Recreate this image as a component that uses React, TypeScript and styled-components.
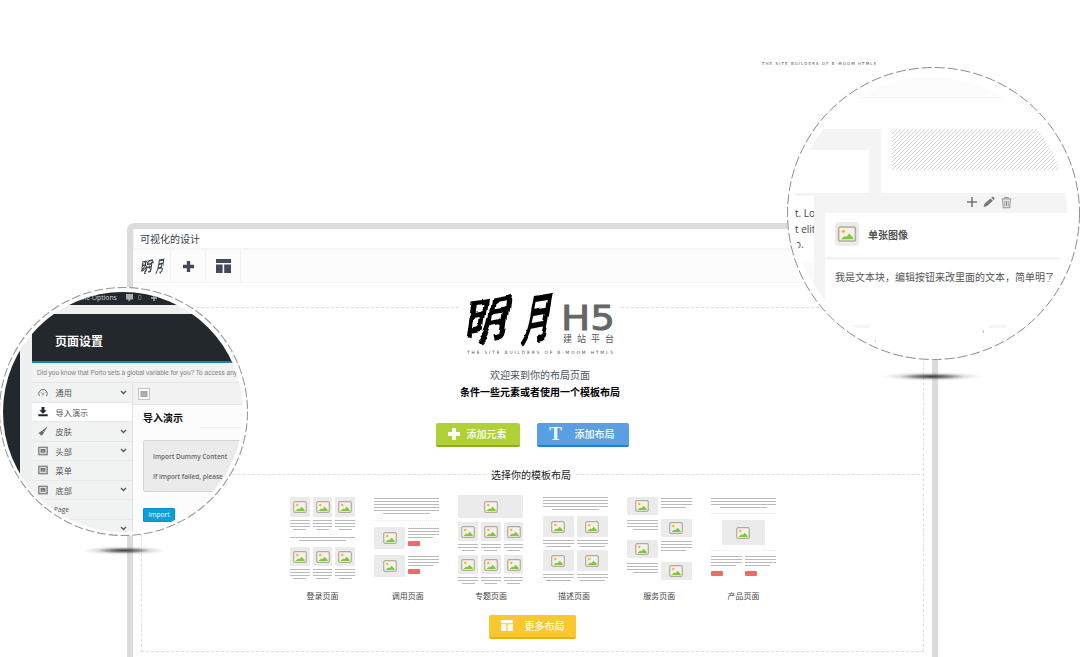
import React from "react";
import styled, { createGlobalStyle } from "styled-components";

const sans = `"Open Sans", "Noto Sans CJK SC", sans-serif`;

const Global = createGlobalStyle`
  * { box-sizing: border-box; }
  body { margin: 0; background: #fff; font-family: ${sans}; }
  svg { display: block; flex: none; }
`;

const Stage = styled.main`
  position: relative;
  width: 1080px;
  height: 657px;
  overflow: hidden;
  background: #fff;
  display: flex;
  flex-direction: column;
`;

/* ---------- editor window ---------- */
const TopCaption = styled.div`
  height: 223px;
  padding: 61px 0 0 762px;
`;
const Window = styled.section`
  width: 811px;
  height: 434px;
  margin-left: 127px;
  border: 6px solid #dcdcdc;
  border-bottom: 0;
  border-radius: 7px 7px 0 0;
  background: #fff;
`;
const TitleBar = styled.header`
  height: 21px;
  padding-left: 6px;
  border-left: 1px solid #f3f3f3;
  border-bottom: 2px solid #f6f6f6;
  font-size: 10px;
  line-height: 20px;
  color: #36404c;
`;
const Toolbar = styled.nav`
  display: flex;
  height: 33px;
  background: #fcfcfc;
  border-bottom: 1px solid #f3f3f3;
`;
const Tool = styled.div<{ $w: number }>`
  width: ${(p) => p.$w}px;
  display: flex;
  align-items: center;
  justify-content: center;
  border-right: 1px solid #f3f3f3;
`;
const Canvas = styled.div`
  width: 783px;
  height: 345px;
  margin: 24px 0 0 8px;
  border: 1px dashed #dedede;
  display: flex;
  flex-direction: column;
  align-items: center;
`;
const Brand = styled.div`
  width: 162px;
  height: 70px;
  margin: -20px 0 0 15px;
  background: #fff;
`;
const Greeting = styled.div`
  margin-top: 9px;
`;
const Welcome = styled.p<{ $strong?: boolean }>`
  margin: 0 0 0 15px;
  font-size: 10px;
  line-height: 17px;
  height: 17px;
  text-align: center;
  white-space: nowrap;
  color: ${(p) => (p.$strong ? "#000" : "#4a5562")};
  font-weight: ${(p) => (p.$strong ? 700 : 400)};
`;
const Actions = styled.div`
  display: flex;
  gap: 17px;
  margin: 22px 0 0 -1px;
`;
const Button = styled.button<{ $w: number; $bg: string; $edge: string; $gap: number }>`
  width: ${(p) => p.$w}px;
  height: 24px;
  padding: 0 0 1px 12px;
  display: flex;
  align-items: center;
  gap: ${(p) => p.$gap}px;
  border: 0;
  border-bottom: 2px solid ${(p) => p.$edge};
  border-radius: 2px;
  background: ${(p) => p.$bg};
  color: #fff;
  font: 500 10px/20px ${sans};
  white-space: nowrap;
`;
const Serif = styled.span`
  width: 14px;
  font: 700 19px/20px "Liberation Serif", serif;
`;
const Divider = styled.div`
  align-self: stretch;
  display: flex;
  align-items: center;
  gap: 5px;
  height: 18px;
  margin: 18px 3px 12px 0;
  font-size: 10px;
  color: #222;
  &::before,
  &::after {
    content: "";
    flex: 1;
    border-top: 1px dashed #dedede;
  }
`;
const Gallery = styled.div`
  display: flex;
  gap: 19.2px;
  margin-left: 1px;
`;
const Template = styled.figure`
  width: 65px;
  margin: 0;
`;
const Preview = styled.div<{ $top?: number }>`
  height: 90px;
  padding-top: ${(p) => p.$top ?? 0}px;
`;
const Label = styled.figcaption<{ $shift?: number }>`
  margin-top: 3px;
  height: 16px;
  padding-left: ${(p) => Math.max(p.$shift ?? 0, 0) * 2}px;
  padding-right: ${(p) => Math.max(-(p.$shift ?? 0), 0) * 2}px;
  font-size: 8px;
  line-height: 16px;
  text-align: center;
  color: #444;
`;
const More = styled.div`
  margin: 11px 0 0 -1px;
`;

/* ---------- template preview parts ---------- */
const Row = styled.div<{ $gap?: number; $mt?: number }>`
  display: flex;
  justify-content: space-between;
  gap: ${(p) => p.$gap ?? 3}px;
  margin-top: ${(p) => p.$mt ?? 0}px;
`;
const Col = styled.div`
  flex: 1;
  min-width: 0;
`;
const Tile = styled.div<{ $h: number; $w?: number }>`
  width: ${(p) => (p.$w ? `${p.$w}px` : "auto")};
  height: ${(p) => p.$h}px;
  margin: 0 auto;
  border-radius: 1px;
  background: #ebebeb;
  display: flex;
  align-items: center;
  justify-content: center;
`;
const Line = styled.div<{ $w?: string; $side?: string }>`
  height: 1px;
  width: ${(p) => p.$w ?? "100%"};
  margin-left: ${(p) => (p.$side === "left" ? "0" : "auto")};
  margin-right: ${(p) => (p.$side === "right" ? "0" : "auto")};
  background: #bababa;
`;
const LineStack = styled.div<{ $mt: number }>`
  display: grid;
  row-gap: 2px;
  margin-top: ${(p) => p.$mt}px;
`;
const Dots = styled.div<{ $mt: number }>`
  margin-top: ${(p) => p.$mt}px;
  border-top: 1px dotted #e8e8e8;
`;
const Pill = styled.div<{ $mt: number }>`
  width: 12px;
  height: 5px;
  margin-top: ${(p) => p.$mt}px;
  border-radius: 1px;
  background: #f06a6a;
`;

const Picture = ({ w = 14, h = 12 }: { w?: number; h?: number }) => (
  <svg width={w} height={h} viewBox="0 0 14 12">
    <rect x=".7" y=".7" width="12.6" height="10.6" rx="1.4" fill="#f3f1ee" stroke="#b8aa98" strokeWidth="1.2" />
    <circle cx="4.3" cy="4" r="1.2" fill="#fbb516" />
    <path d="M2.4 9.9 5.2 7.5l1.2.8 2.3-2.6 3 3.2v1z" fill="#7acb35" />
  </svg>
);

const Lines = ({ n, mt = 0, last, side }: { n: number; mt?: number; last: string; side?: string }) => (
  <LineStack $mt={mt}>
    {Array.from({ length: n }, (_, i) => (
      <Line key={i} />
    ))}
    <Line $w={last} $side={side} />
  </LineStack>
);

const Cells = ({ count, h, lines, mt = 0 }: { count: number; h: number; lines: number; mt?: number }) => (
  <Row $mt={mt}>
    {Array.from({ length: count }, (_, i) => (
      <Col key={i}>
        <Tile $h={h}>
          <Picture />
        </Tile>
        <Lines n={lines} mt={3} last={count === 2 ? "25px" : "13px"} />
      </Col>
    ))}
  </Row>
);

const MediaRow = ({ mt }: { mt: number }) => (
  <Row $mt={mt}>
    <Col>
      <Tile $h={22}>
        <Picture />
      </Tile>
    </Col>
    <Col>
      <Lines n={3} mt={1} last="25px" side="left" />
      <Pill $mt={3} />
    </Col>
  </Row>
);

const ServiceRow = ({ mt, flip }: { mt: number; flip?: boolean }) => {
  const tile = (
    <Col key="tile">
      <Tile $h={18}>
        <Picture />
      </Tile>
    </Col>
  );
  const text = (
    <Col key="text">
      <Lines n={3} mt={1} last="25px" side={flip ? "right" : "left"} />
    </Col>
  );
  return <Row $mt={mt}>{flip ? [text, tile] : [tile, text]}</Row>;
};

/* ---------- logo ---------- */
const cjk = `"Noto Sans CJK SC", sans-serif`;
const Slogan = ({ width, size, color }: { width: number; size: number; color: string }) => (
  <svg width={width} height={size + 2}>
    <text x="0" y={size} fontFamily={`"DejaVu Sans", sans-serif`} fontSize={size} fill={color} textLength={width} lengthAdjust="spacing">
      THE SITE BUILDERS OF B-MOOM HTML5
    </text>
  </svg>
);

const Mark = ({ w, h, color = "#000" }: { w: number; h: number; color?: string }) => (
  <svg width={w} height={h} viewBox="0 0 88 58" preserveAspectRatio="none" overflow="visible">
    <defs>
      <filter id="brush" x="-10%" y="-10%" width="120%" height="120%">
        <feTurbulence type="fractalNoise" baseFrequency="0.045" numOctaves="1" seed="11" result="n" />
        <feDisplacementMap in="SourceGraphic" in2="n" scale="11" xChannelSelector="R" yChannelSelector="G" />
      </filter>
    </defs>
    <g filter="url(#brush)" fill={color} fontFamily={cjk} fontWeight="700">
      <text transform="matrix(.88 -.16 -.14 .98 0 51)" fontSize="50">
        明
      </text>
      <text transform="matrix(.6 -.1 -.2 1.1 56 51)" fontSize="51">
        月
      </text>
    </g>
  </svg>
);

const BrandArt = () => (
  <svg width="162" height="70" viewBox="0 0 162 70">
    <svg x="5" y="3" width="88" height="58" overflow="visible">
      <Mark w={88} h={58} />
    </svg>
    <text x="102" y="41.6" fontFamily={`"DejaVu Sans", sans-serif`} fontSize="34.5" fill="#666" stroke="#666" strokeWidth=".9" textLength="54" lengthAdjust="spacingAndGlyphs">
      H5
    </text>
    <text x="104" y="53.5" fontFamily={cjk} fontSize="9" fill="#555" textLength="51">
      建站平台
    </text>
    <svg x="8" y="62">
      <Slogan width={146} size={4.4} color="#555" />
    </svg>
  </svg>
);

const Plus = ({ size, color, t = 4 }: { size: number; color: string; t?: number }) => (
  <svg width={size} height={size} viewBox="0 0 12 12">
    <path d="M6 0v12M0 6h12" stroke={color} strokeWidth={t} />
  </svg>
);
const LayoutIcon = ({ w, h, color }: { w: number; h: number; color: string }) => (
  <svg width={w} height={h} viewBox="0 0 15 14">
    <path d="M0 0h15v4H0zM0 5.4h6.6V14H0zM8.2 5.4H15V14H8.2z" fill={color} />
  </svg>
);

/* ---------- magnifier lenses ---------- */
const Lens = styled.div<{ $x: number; $y: number; $d: number }>`
  position: absolute;
  left: ${(p) => p.$x}px;
  top: ${(p) => p.$y}px;
  width: ${(p) => p.$d}px;
  height: ${(p) => p.$d}px;
  border-radius: 50%;
  background: #fff;
`;
const Ring = styled.svg`
  position: absolute;
  inset: 0;
  overflow: visible;
`;
const Glass = styled.div<{ $d: number; $l: number; $t: number }>`
  width: ${(p) => p.$d}px;
  height: ${(p) => p.$d}px;
  margin: ${(p) => p.$t}px 0 0 ${(p) => p.$l}px;
  border-radius: 50%;
  overflow: hidden;
`;
const Shade = styled.div<{ $x: number; $y: number; $w: number }>`
  position: absolute;
  left: ${(p) => p.$x}px;
  top: ${(p) => p.$y}px;
  width: ${(p) => p.$w}px;
  height: 9px;
  background: radial-gradient(closest-side, rgba(45, 45, 50, 0.9) 0%, rgba(60, 60, 65, 0.6) 35%, rgba(110, 110, 115, 0.2) 65%, transparent 100%);
`;

/* settings panel inside the left lens */
const AdminBar = styled.div`
  height: 13px;
  padding: 0 0 2px 79px;
  display: flex;
  align-items: center;
  background: #22282c;
  color: #d3d6d8;
  font-size: 6.8px;
  line-height: 10px;
  white-space: nowrap;
`;
const Bubble = styled.span`
  display: flex;
  align-items: center;
  gap: 5px;
  margin-left: 9px;
  color: #8d9296;
`;
const AdminBody = styled.div`
  display: grid;
  grid-template-columns: 17px 12px 1fr;
  height: 227px;
`;
const SideStrip = styled.div<{ $bg: string }>`
  background: ${(p) => p.$bg};
`;
const Panel = styled.div`
  display: flex;
  flex-direction: column;
  background: #fcfcfc;
  min-width: 0;
`;
const PanelGap = styled.div`
  height: 9px;
  background: #eff1f1;
`;
const PanelHead = styled.h2`
  margin: 0;
  height: 49px;
  padding: 4px 0 0 23px;
  border-bottom: 2px solid #1482bf;
  background: #22282c;
  color: #fff;
  font-size: 12px;
  font-weight: 600;
  line-height: 48px;
`;
const Notice = styled.div`
  height: 20px;
  padding-left: 5px;
  background: #f2f2f2;
  border-bottom: 1px solid #e6e6e6;
  font: 6.5px/19px "Liberation Sans", sans-serif;
  color: #808080;
  white-space: nowrap;
`;
const PanelBody = styled.div`
  flex: 1;
  display: grid;
  grid-template-columns: 101px 1fr;
`;
const Menu = styled.ul`
  margin: 0;
  padding: 0;
  list-style: none;
  background: #f1f3f3;
  border-right: 1px solid #e2e2e2;
`;
const MenuItem = styled.li<{ $active?: boolean }>`
  display: flex;
  align-items: center;
  height: 19.5px;
  padding: 0 5px 0 6px;
  border-bottom: 1px solid #e8e9e9;
  background: ${(p) => (p.$active ? "#fff" : "transparent")};
  color: #555;
  font-size: 8.2px;
`;
const MenuText = styled.span<{ $small?: boolean }>`
  flex: 1;
  margin-left: ${(p) => (p.$small ? 6 : 7.5)}px;
  font-size: ${(p) => (p.$small ? "6.6px" : "inherit")};
`;
const Pane = styled.div`
  min-width: 0;
`;
const PaneBar = styled.div`
  height: 22px;
  padding: 5px 0 0 5px;
  background: #f2f2f2;
  border-bottom: 1px solid #e8e8e8;
`;
const PaneTitle = styled.h3`
  margin: 5px 0 0 10px;
  font-size: 10px;
  line-height: 17px;
  font-weight: 700;
  color: #111;
`;
const Rule = styled.div`
  margin-left: 67px;
  border-top: 1px solid #eee;
`;
const InfoBox = styled.div`
  height: 52px;
  margin: 12px 0 0 10px;
  padding: 6px 0 0 9px;
  border: 1px solid #d5d5d5;
  border-radius: 2px;
  background: #ebebeb;
  font-size: 6.45px;
  font-weight: 600;
  line-height: 19.5px;
  color: #666;
  white-space: nowrap;
`;
const ImportButton = styled.div`
  width: 32px;
  height: 14px;
  margin: 16px 0 0 10px;
  border-radius: 1px;
  border: 1px solid #0b8fc4;
  background: #0aa0da;
  color: #fff;
  font-size: 6.6px;
  line-height: 12px;
  text-align: center;
`;

const Chevron = () => (
  <svg width="7" height="5" viewBox="0 0 7 5">
    <path d="M1 1l2.5 2.5L6 1" fill="none" stroke="#555" strokeWidth="1.3" />
  </svg>
);
const Boxed = () => (
  <svg width="10" height="10" viewBox="0 0 10 10">
    <rect x=".8" y="1.2" width="8.4" height="7.6" fill="#dcdcdc" stroke="#666" strokeWidth="1" />
    <path d="M2.6 3h4.8v3.8H2.6z" fill="#777" />
    <path d="M4.2 4.6v2.2M5.8 4.6v2.2" stroke="#bbb" strokeWidth=".6" />
  </svg>
);
const menuIcons: Record<string, React.ReactNode> = {
  gauge: (
    <svg width="10" height="10" viewBox="0 0 10 10">
      <path d="M1.7 8.4H1A4.3 4.3 0 1 1 9 8.4H8M5 8.4V5.8M2.8 5.6h.6M6.8 5.6h.6" fill="none" stroke="#6c6c6c" strokeWidth="1" />
    </svg>
  ),
  down: (
    <svg width="10" height="10" viewBox="0 0 10 10">
      <path d="M3.5 0h3v3.2h2.2L5 6.8 1.3 3.2h2.2zM.3 7.2h9.4v2H.3z" fill="#222b33" />
    </svg>
  ),
  brush: (
    <svg width="10" height="10" viewBox="0 0 10 10">
      <path d="M9.8.3 6.2 5.9 4.5 4.3zM4 4.3 6 6.2C5.6 8.2 4.5 9.3 3 9.6L.4 6.8C1.8 6.4 3 5.8 4 4.3z" fill="#6c6c6c" />
    </svg>
  ),
  box: <Boxed />,
};

const menu = [
  { icon: "gauge", text: "通用", open: true },
  { icon: "down", text: "导入演示", active: true },
  { icon: "brush", text: "皮肤", open: true },
  { icon: "box", text: "头部", open: true },
  { icon: "box", text: "菜单" },
  { icon: "box", text: "底部", open: true },
];

const SettingsLens = () => (
  <>
    <Shade $x={82} $y={546} $w={84} />
    <Lens $x={-1} $y={287} $d={249}>
      <Glass $d={240} $l={4} $t={5}>
        <AdminBar>
          ne Options
          <Bubble>
            <svg width="7" height="8" viewBox="0 0 7 8">
              <path d="M0 0h7v5.5H4.5L2.5 8V5.5H0z" fill="#a9aeb1" />
            </svg>
            0
          </Bubble>
          <Bubble>
            <Plus size={6} color="#a9aeb1" t={3} />
          </Bubble>
        </AdminBar>
        <AdminBody>
          <SideStrip $bg="#22282c" />
          <SideStrip $bg="#eff1f1" />
          <Panel>
            <PanelGap />
            <PanelHead>页面设置</PanelHead>
            <Notice>Did you know that Porto sets a global variable for you? To access any</Notice>
            <PanelBody>
              <Menu>
                {menu.map((m) => (
                  <MenuItem key={m.text} $active={m.active}>
                    {menuIcons[m.icon]}
                    <MenuText>{m.text}</MenuText>
                    {m.open && <Chevron />}
                  </MenuItem>
                ))}
                <MenuItem>
                  <svg width="10" height="10" />
                  <MenuText $small>Page</MenuText>
                </MenuItem>
                <MenuItem>
                  <MenuText />
                  <Chevron />
                </MenuItem>
              </Menu>
              <Pane>
                <PaneBar>
                  <svg width="12" height="12" viewBox="0 0 12 12">
                    <rect x=".5" y=".5" width="11" height="11" fill="#f9f9f9" stroke="#c2c2c2" />
                    <path d="M2.5 3h7v6h-7z" fill="#a5a5a5" />
                    <path d="M4.8 4.8v3M6.8 4.8v3" stroke="#ccc" strokeWidth=".7" />
                  </svg>
                </PaneBar>
                <PaneTitle>导入演示</PaneTitle>
                <Rule />
                <InfoBox>
                  Import Dummy Content
                  <br />
                  If import failed, please
                </InfoBox>
                <ImportButton>Import</ImportButton>
              </Pane>
            </PanelBody>
          </Panel>
        </AdminBody>
      </Glass>
      <Ring width="249" height="249">
        <circle cx="124.5" cy="124.5" r="124" fill="none" stroke="#999" strokeWidth="1.1" strokeDasharray="9 2.8" />
      </Ring>
    </Lens>
  </>
);

/* block editor inside the right lens */
const TopBand = styled.div`
  height: 21px;
  background: #fcfcfc;
  border-bottom: 1px solid #f4f4f4;
`;
const Blocks = styled.div`
  display: flex;
  height: 64px;
  margin-top: 31px;
`;
const GreyCorner = styled.div`
  width: 87px;
  height: 64px;
  border-top: 21px solid #f4f4f4;
  border-right: 12px solid #f4f4f4;
`;
const Hatch = styled.div`
  flex: 1;
  height: 41px;
  margin-left: 11px;
  background: repeating-linear-gradient(135deg, #d6d6d6 0 1px, #fff 1px 2.83px);
`;
const Editor = styled.div`
  display: grid;
  grid-template-columns: 20px 1fr;
`;
const Excerpt = styled.div`
  height: 69px;
  padding: 10px 0 0 1px;
  border-top: 3px solid #f4f4f4;
  font-size: 10px;
  line-height: 15.5px;
  color: #444;
  white-space: nowrap;
  overflow: hidden;
  background: #fff;
`;
const ExcerptColumn = styled.div`
  height: 132px;
  background: #fafafa;
`;
const Module = styled.div`
  padding-left: 11px;
  background: #f4f4f4;
  height: 116px;
`;
const ModuleBar = styled.div`
  display: flex;
  align-items: center;
  gap: 6px;
  height: 20px;
  padding: 0 0 2px 142px;
`;
const ImageCard = styled.div`
  display: flex;
  align-items: center;
  gap: 9px;
  height: 44px;
  padding: 0 0 2px 10px;
  background: #fff;
  font-size: 10px;
  font-weight: 700;
  color: #555;
`;
const Thumb = styled.div`
  width: 24px;
  height: 24px;
  border-radius: 4px;
  background: #ebebeb;
  display: flex;
  align-items: center;
  justify-content: center;
`;
const TextCard = styled.div`
  height: 65px;
  margin-top: 3px;
  padding: 8px 0 0 10px;
  background: #fff;
  font-size: 10px;
  line-height: 18px;
  color: #555;
  white-space: nowrap;
`;
const FootMarks = styled.div`
  display: flex;
  justify-content: space-between;
  height: 3px;
  padding: 0 56px 0 54px;
`;
const FootMark = styled.div`
  width: 22px;
  background: #f6f6f6;
`;

const EditorLens = () => (
  <>
    <Shade $x={882} $y={372} $w={100} />
    <Lens $x={787} $y={67} $d={293}>
      <Glass $d={273} $l={7} $t={10}>
        <TopBand />
        <Blocks>
          <GreyCorner />
          <Hatch />
        </Blocks>
        <Editor>
          <ExcerptColumn>
            <Excerpt>
              t. Lo
              <br />t elit
              <br />
              o.
            </Excerpt>
          </ExcerptColumn>
          <Module>
            <ModuleBar>
              <Plus size={10} color="#777" t={1.9} />
              <svg width="12" height="12" viewBox="0 0 13 12">
                <path d="M.5 11.5 1.6 8 8.2 2.1l2.5 2.5L4 10.6zM9 1.4l1-.9q.8-.5 1.4.1l1 1q.6.7 0 1.3l-1 .9z" fill="#77777b" />
              </svg>
              <svg width="11" height="13" viewBox="0 0 12 13" fill="none" stroke="#888" strokeWidth="1">
                <path d="M.6 2.6h10.8M4 2.4V1h4v1.4M1.8 3l.6 9.2h7.2l.6-9.2M4.2 4.6v6M6 4.6v6M7.8 4.6v6" />
              </svg>
            </ModuleBar>
            <ImageCard>
              <Thumb>
                <Picture w={20} h={16} />
              </Thumb>
              单张图像
            </ImageCard>
            <TextCard>我是文本块，编辑按钮来改里面的文本，简单明了</TextCard>
          </Module>
        </Editor>
        <FootMarks>
          <FootMark />
          <FootMark />
        </FootMarks>
      </Glass>
      <Ring width="293" height="293">
        <circle cx="146.5" cy="146.5" r="146" fill="none" stroke="#8c8c8c" strokeWidth="1" strokeDasharray="10 3" />
        <path d="M196.5 263.5l-.5 2.5M88 274h1" stroke="#aaa" strokeWidth="1" />
      </Ring>
    </Lens>
  </>
);

export default function App() {
  return (
    <>
      <Global />
      <Stage>
        <TopCaption>
          <Slogan width={114} size={4} color="#555" />
        </TopCaption>
        <Window>
          <TitleBar>可视化的设计</TitleBar>
          <Toolbar>
            <Tool $w={38}>
              <Mark w={24} h={17} color="#3d4650" />
            </Tool>
            <Tool $w={35}>
              <Plus size={11} color="#414b58" t={3.6} />
            </Tool>
            <Tool $w={35}>
              <LayoutIcon w={15} h={14} color="#414b58" />
            </Tool>
          </Toolbar>
          <Canvas>
            <Brand>
              <BrandArt />
            </Brand>
            <Greeting>
              <Welcome>欢迎来到你的布局页面</Welcome>
              <Welcome $strong>条件一些元素或者使用一个模板布局</Welcome>
            </Greeting>
            <Actions>
              <Button $w={84} $bg="#afd137" $edge="#8cae1f" $gap={7}>
                <Plus size={12} color="#fff" />
                添加元素
              </Button>
              <Button $w={92} $bg="#5a9fe2" $edge="#1f7fdc" $gap={12}>
                <Serif>T</Serif>
                添加布局
              </Button>
            </Actions>
            <Divider>选择你的模板布局</Divider>
            <Gallery>
              <Template>
                <Preview $top={2}>
                  <Cells count={3} h={20} lines={3} />
                  <Lines n={1} mt={7} last="47px" />
                  <Cells count={3} h={19} lines={3} mt={6} />
                </Preview>
                <Label>登录页面</Label>
              </Template>
              <Template>
                <Preview $top={3}>
                  <Lines n={5} last="47px" />
                  <Dots $mt={6} />
                  <MediaRow mt={6} />
                  <MediaRow mt={6} />
                </Preview>
                <Label $shift={1}>调用页面</Label>
              </Template>
              <Template>
                <Preview>
                  <Tile $h={23}>
                    <Picture />
                  </Tile>
                  <Cells count={3} h={19} lines={2} mt={4} />
                  <Cells count={3} h={19} lines={2} mt={4} />
                </Preview>
                <Label>专题页面</Label>
              </Template>
              <Template>
                <Preview $top={2}>
                  <Lines n={4} last="47px" />
                  <Cells count={2} h={21} lines={2} mt={6} />
                  <Cells count={2} h={21} lines={2} mt={3} />
                </Preview>
                <Label $shift={-1}>描述页面</Label>
              </Template>
              <Template>
                <Preview $top={2}>
                  <ServiceRow mt={0} />
                  <ServiceRow mt={4} flip />
                  <ServiceRow mt={3} />
                  <ServiceRow mt={4} flip />
                </Preview>
                <Label>服务页面</Label>
              </Template>
              <Template>
                <Preview $top={3}>
                  <Lines n={3} last="47px" />
                  <Dots $mt={5} />
                  <Row $mt={6}>
                    <Tile $h={25} $w={43}>
                      <Picture />
                    </Tile>
                  </Row>
                  <Dots $mt={5} />
                  <Row>
                    <Col>
                      <Lines n={3} mt={5} last="25px" side="left" />
                      <Pill $mt={5} />
                    </Col>
                    <Col>
                      <Lines n={3} mt={5} last="25px" side="left" />
                      <Pill $mt={5} />
                    </Col>
                  </Row>
                </Preview>
                <Label>产品页面</Label>
              </Template>
            </Gallery>
            <More>
              <Button $w={87} $bg="#fbc730" $edge="#eeb010" $gap={12}>
                <LayoutIcon w={12} h={11} color="#fff" />
                更多布局
              </Button>
            </More>
          </Canvas>
        </Window>
        <SettingsLens />
        <EditorLens />
      </Stage>
    </>
  );
}
